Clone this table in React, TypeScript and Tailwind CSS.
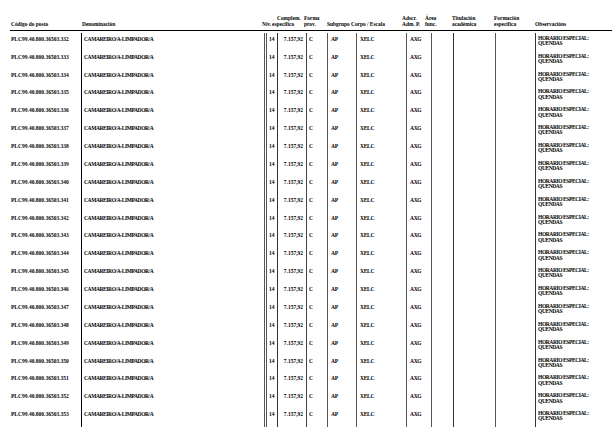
import React from "react";

const cols =
  "grid-cols-[81px_183px_13px_29px_21px_29px_50px_25px_22px_42px_40px_80px]";

const rows = Array.from({ length: 22 }, (_, i) => 332 + i);

export default function App() {
  return (
    <div className="w-[615px] h-[439px] bg-white text-black font-bold font-['Liberation_Serif',serif] overflow-hidden">
      {/* header */}
      <div className={`grid ${cols} h-[29.5px] items-end pb-[1.5px] text-[5.4px] leading-[6.7px] whitespace-nowrap`}>
        <div className="pl-[11px]">Código do posto</div>
        <div className="pl-[1px]">Denominación</div>
        <div className="-ml-[2px]">Niv.</div>
        <div>
          <div>Complem.</div>
          <div className="-ml-[5px]">específico</div>
        </div>
        <div className="-ml-[2px]">
          <div>Forma</div>
          <div>prov.</div>
        </div>
        <div>Subgrupo</div>
        <div className="-ml-[5px]">Corpo / Escala</div>
        <div className="-ml-[4px]">
          <div>Adscr.</div>
          <div>Adm. P.</div>
        </div>
        <div className="-ml-[6px]">
          <div>Área</div>
          <div>func.</div>
        </div>
        <div className="-ml-[1px]">
          <div>Titulación</div>
          <div>académica</div>
        </div>
        <div className="-ml-[1px]">
          <div>Formación</div>
          <div>específica</div>
        </div>
        <div>Observacións</div>
      </div>
      <div className="ml-[10px] w-[602px] h-[1.5px] bg-black" />
      <div className="h-[2.3px]" />
      {/* body */}
      <div className="text-[5.5px] leading-[5.2px] whitespace-nowrap">
        {rows.map((n) => (
          <div key={n} className={`grid ${cols} h-[17.88px]`}>
            <div className="pl-[11px] pt-[3.5px]">PLC99.40.800.36503.{n}</div>
            <div className="border-l border-black pl-[2px] pt-[3.5px] tracking-[-0.4px]">CAMAREIRO/A-LIMPADOR/A</div>
            <div className="border-l-[3px] border-double border-[#555] pl-[2px] pt-[3.5px]">14</div>
            <div className="border-l border-[#333] pr-[3px] pt-[3.5px] text-right">7.157,92</div>
            <div className="border-l border-[#444] pl-[2px] pt-[3.5px]">C</div>
            <div className="border-l border-[#555] pl-[3px] pt-[3.5px] tracking-[-0.3px]">AP</div>
            <div className="border-l border-[#555] pl-[3px] pt-[3.5px] tracking-[-0.3px]">XELC</div>
            <div className="border-l border-[#555] pl-[3px] pt-[3.5px] tracking-[-0.3px]">AXG</div>
            <div className="border-l border-[#555]" />
            <div className="border-l border-[#333]" />
            <div className="border-l border-[#555]" />
            <div className="border-l border-[#333] pl-[2px] pt-[2.5px] tracking-[-0.4px]">
              <div>HORARIO ESPECIAL:</div>
              <div>QUENDAS</div>
            </div>
          </div>
        ))}
      </div>
    </div>
  );
}
